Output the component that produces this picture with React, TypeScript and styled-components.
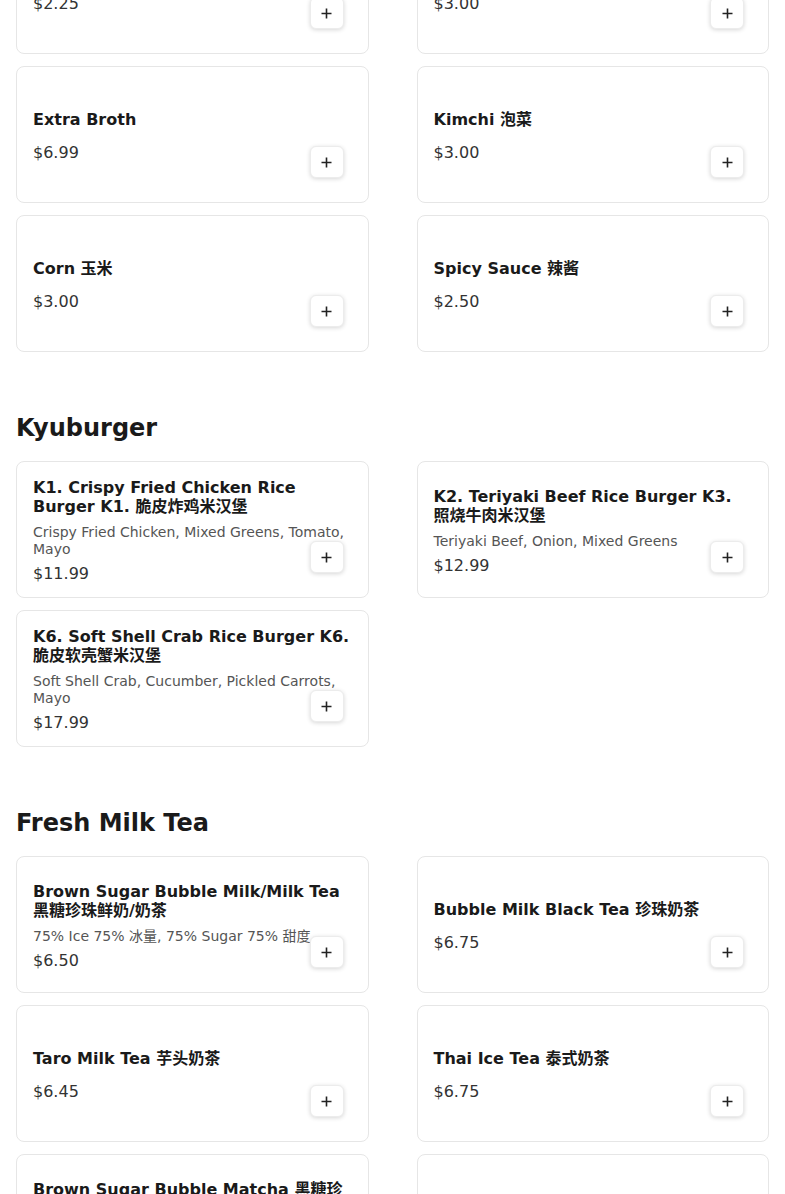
import React from "react";
import styled, { createGlobalStyle } from "styled-components";

const Global = createGlobalStyle`
  html, body { margin: 0; padding: 0; background: #ffffff; }
  body {
    font-family: "DejaVu Sans", "Noto Sans CJK SC", sans-serif;
    color: #1a1a1a;
    overflow: hidden;
  }
  * { box-sizing: border-box; }
`;

type Item = { name: string; desc?: string; price: string };
type Section = { title?: string; items: Item[] };

const sections: Section[] = [
  {
    items: [
      { name: "Fish Cake 鱼饼", price: "$2.25" },
      { name: "Seaweed 海苔", price: "$3.00" },
      { name: "Extra Broth", price: "$6.99" },
      { name: "Kimchi 泡菜", price: "$3.00" },
      { name: "Corn 玉米", price: "$3.00" },
      { name: "Spicy Sauce 辣酱", price: "$2.50" },
    ],
  },
  {
    title: "Kyuburger",
    items: [
      {
        name: "K1. Crispy Fried Chicken Rice Burger K1. 脆皮炸鸡米汉堡",
        desc: "Crispy Fried Chicken, Mixed Greens, Tomato, Mayo",
        price: "$11.99",
      },
      {
        name: "K2. Teriyaki Beef Rice Burger K3. 照烧牛肉米汉堡",
        desc: "Teriyaki Beef, Onion, Mixed Greens",
        price: "$12.99",
      },
      {
        name: "K6. Soft Shell Crab Rice Burger K6. 脆皮软壳蟹米汉堡",
        desc: "Soft Shell Crab, Cucumber, Pickled Carrots, Mayo",
        price: "$17.99",
      },
    ],
  },
  {
    title: "Fresh Milk Tea",
    items: [
      {
        name: "Brown Sugar Bubble Milk/Milk Tea 黑糖珍珠鲜奶/奶茶",
        desc: "75% Ice 75% 冰量, 75% Sugar 75% 甜度",
        price: "$6.50",
      },
      { name: "Bubble Milk Black Tea 珍珠奶茶", price: "$6.75" },
      { name: "Taro Milk Tea 芋头奶茶", price: "$6.45" },
      { name: "Thai Ice Tea 泰式奶茶", price: "$6.75" },
      {
        name: "Brown Sugar Bubble Matcha 黑糖珍珠抹茶鲜奶",
        desc: "75% Ice 75% 冰量, 75% Sugar 75% 甜度",
        price: "$6.95",
      },
      { name: "Jasmine Milk Green Tea 茉莉奶绿", price: "$6.45" },
    ],
  },
];

const Page = styled.main`
  padding: 0 16px 40px;
  margin-top: -83px;
`;

const MenuSection = styled.section<{ $first?: boolean }>`
  margin-top: ${(p) => (p.$first ? "0" : "62px")};
`;

const Heading = styled.h2`
  margin: 0 0 18px;
  font-size: 24px;
  line-height: 29px;
  font-weight: 700;
  color: #1a1a1a;
`;

const Grid = styled.div`
  display: grid;
  grid-template-columns: 1fr 1fr;
  column-gap: 48px;
  row-gap: 12px;
`;

const Card = styled.article`
  position: relative;
  min-height: 137px;
  border: 1px solid #e6e6e6;
  border-radius: 8px;
  background: #ffffff;
  padding: 16px 16px 12px;
  display: flex;
  flex-direction: column;
  justify-content: center;
`;

const Title = styled.h3`
  margin: 0;
  font-size: 16px;
  line-height: 19px;
  font-weight: 700;
  color: #1a1a1a;
`;

const Desc = styled.p`
  margin: 8px 0 0;
  font-size: 14px;
  line-height: 17px;
  color: #555555;
`;

const Price = styled.div<{ $afterDesc?: boolean }>`
  margin-top: ${(p) => (p.$afterDesc ? "5px" : "13px")};
  font-size: 16px;
  line-height: 22px;
  color: #333333;
`;

const AddButton = styled.button`
  position: absolute;
  right: 24px;
  bottom: 24px;
  width: 34px;
  height: 32px;
  padding: 0;
  border: 1px solid #ececec;
  border-radius: 6px;
  background: #ffffff;
  box-shadow: 0 1px 4px rgba(0, 0, 0, 0.16);
  display: flex;
  align-items: center;
  justify-content: center;
  cursor: pointer;
  color: #222222;
`;

const PlusIcon = () => (
  <svg width="11" height="11" viewBox="0 0 11 11" aria-hidden="true">
    <path d="M5.5 0.5v10M0.5 5.5h10" stroke="currentColor" strokeWidth="1.6" />
  </svg>
);

const MenuCard = ({ item }: { item: Item }) => (
  <Card>
    <Title>{item.name}</Title>
    {item.desc && <Desc>{item.desc}</Desc>}
    <Price $afterDesc={!!item.desc}>{item.price}</Price>
    <AddButton aria-label={`Add ${item.name}`}>
      <PlusIcon />
    </AddButton>
  </Card>
);

export default function App() {
  return (
    <>
      <Global />
      <Page>
        {sections.map((s, i) => (
          <MenuSection key={i} $first={i === 0}>
            {s.title && <Heading>{s.title}</Heading>}
            <Grid>
              {s.items.map((it) => (
                <MenuCard key={it.name} item={it} />
              ))}
            </Grid>
          </MenuSection>
        ))}
      </Page>
    </>
  );
}
